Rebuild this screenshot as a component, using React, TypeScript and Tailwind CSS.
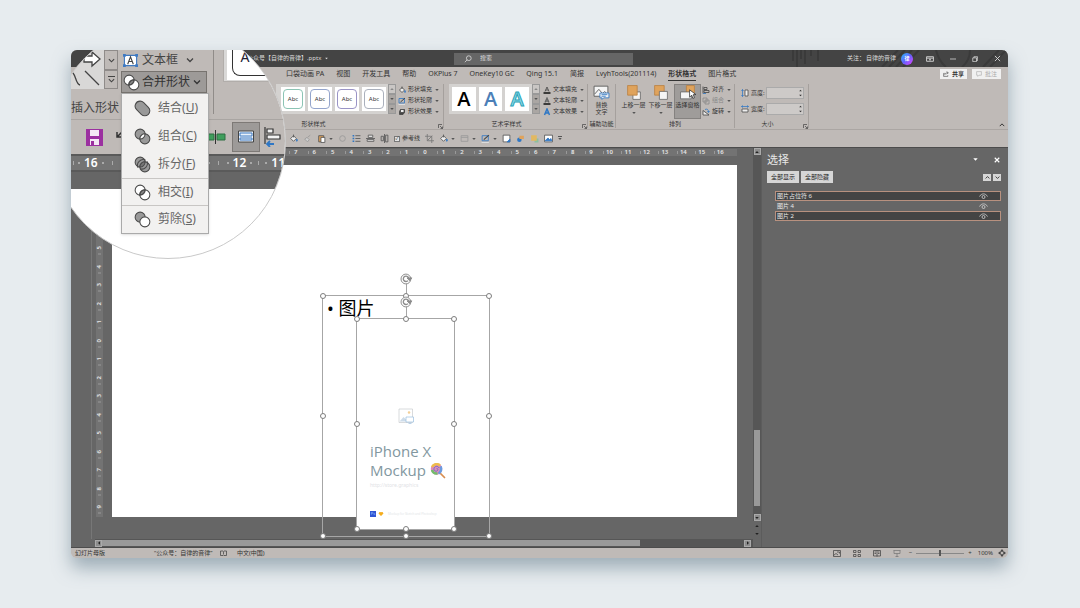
import { ReactNode, useState } from "react";
import clsx from "clsx";

const TABS = [
  "口袋动画 PA",
  "视图",
  "开发工具",
  "帮助",
  "OKPlus 7",
  "OneKey10 GC",
  "Qing 15.1",
  "简报",
  "LvyhTools(201114)",
  "形状格式",
  "图片格式",
];

const LAYERS = [
  { name: "图片占位符 6", selected: true },
  { name: "图片 4", selected: false },
  { name: "图片 2", selected: true },
];

const MERGE_ITEMS = [
  { label: "结合", hotkey: "U", kind: "union" },
  { label: "组合", hotkey: "C", kind: "combine" },
  { label: "拆分", hotkey: "F", kind: "fragment" },
  { label: "相交", hotkey: "I", kind: "intersect" },
  { label: "剪除", hotkey: "S", kind: "subtract" },
];

function Caret({ className = "size-1 text-[#555]" }: { className?: string }) {
  return (
    <svg viewBox="0 0 8 8" className={clsx("shrink-0", className)} fill="currentColor">
      <path d="M0.5 2h7L4 6z" />
    </svg>
  );
}

function Chevron({ className = "size-2" }: { className?: string }) {
  return (
    <svg
      viewBox="0 0 8 8"
      className={clsx("shrink-0", className)}
      fill="none"
      stroke="currentColor"
      strokeWidth="1.3"
    >
      <path d="M1 2.5l3 3 3-3" />
    </svg>
  );
}

function Launcher() {
  return (
    <svg viewBox="0 0 10 10" className="size-[5px]" fill="none" stroke="#444" strokeWidth="1.4">
      <path d="M1 8V1h7M4 4l5 5M9 5v4H5" />
    </svg>
  );
}

function MergeIcon({ kind, className = "size-[17px]" }: { kind: string; className?: string }) {
  const line = { stroke: "#4a4a4a", strokeWidth: 1.1 };
  const lens = "M11.7 6.2A5.3 5.3 0 0 0 6.2 11.7 5.3 5.3 0 0 0 11.7 6.2z";
  return (
    <svg viewBox="0 0 18 18" className={clsx("shrink-0", className)} fill="#fff">
      {kind === "union" && (
        <path
          d="M6.500 1.200A5.300 5.300 0 0 0 2.800 10.300L7.700 15.200A5.300 5.300 0 0 0 15.200 7.700L10.300 2.800A5.300 5.300 0 0 0 6.500 1.200z"
          fill="#999"
          {...line}
        />
      )}
      {(kind === "combine" || kind === "fragment") && (
        <>
          <circle cx="6.5" cy="6.5" r="5.3" fill="#999" {...line} />
          <circle cx="11.5" cy="11.5" r="5.3" fill="#999" {...line} />
          <path d={lens} fill={kind === "combine" ? "#fff" : "#777"} {...line} />
        </>
      )}
      {kind === "fragment" && (
        <>
          <path d="M13.700 5.500a6 6 0 0 1-7.500 8" fill="none" {...line} />
          <path d="M4.300 12.500a6 6 0 0 1 8-8" fill="none" {...line} />
        </>
      )}
      {kind === "intersect" && (
        <>
          <circle cx="6.5" cy="6.5" r="5.3" {...line} />
          <circle cx="11.5" cy="11.5" r="5.3" {...line} />
          <path d={lens} fill="#888" {...line} strokeWidth="1.5" />
        </>
      )}
      {kind === "subtract" && (
        <>
          <circle cx="6.5" cy="6.5" r="5.3" fill="#999" {...line} />
          <circle cx="11.5" cy="11.5" r="5.3" {...line} />
        </>
      )}
    </svg>
  );
}

function TitleBar() {
  return (
    <header className="relative flex h-[17px] shrink-0 items-center bg-[#444] pl-[176px] text-[6px] text-[#ddd]">
      <svg
        className="absolute right-0 top-0 h-full w-60"
        viewBox="0 0 240 17"
        fill="none"
        stroke="#3a3a3a"
        strokeWidth="2"
      >
        <path d="M25 0v11M29 0v17M33 0v9M37 0v14M43 0v6M50 0v11M114 17l16-17M121 17l16-17M128 17l16-17M135 17l16-17" />
        <path d="M168 0c2 8 5 13 10 17M202 0c0 8-3 13-8 17M215 17l16-17M222 17l16-17" />
      </svg>
      <span className="flex w-[207px] items-center gap-1">
        公众号【自律的音律】.pptx
        <Caret className="size-[3px] text-[#ddd]" />
      </span>
      <label className="flex h-3 w-[179px] items-center gap-2 bg-[#666] pl-2.5">
        <svg viewBox="0 0 10 10" className="size-2" fill="none" stroke="#ddd">
          <circle cx="6" cy="4" r="3" />
          <path d="M4 6L1 9" />
        </svg>
        <input
          aria-label="搜索"
          placeholder="搜索"
          className="w-24 bg-transparent outline-none placeholder:text-[#ddd]"
        />
      </label>
      <div className="relative ml-auto flex items-center pr-[7px]">
        <span>关注：</span>
        <span className="ml-px">自律的音律</span>
        <span className="ml-[5px] flex size-3 items-center justify-center rounded-full bg-linear-to-br from-sky-400 via-indigo-500 to-fuchsia-500 text-[5px] font-bold text-white">
          律
        </span>
        <button aria-label="功能区选项" className="ml-[13px]">
          <svg viewBox="0 0 14 10" className="h-[6px] w-2" fill="none" stroke="#ddd" strokeWidth="1.5">
            <path d="M1 1h12v8H1zM1 3.500h12M7 8V5M5.500 6L7 4.700 8.500 6" />
          </svg>
        </button>
        <button aria-label="最小化" className="ml-4">
          <svg viewBox="0 0 8 8" className="size-[6px]" stroke="#ddd">
            <path d="M0 4h8" />
          </svg>
        </button>
        <button aria-label="还原" className="ml-4">
          <svg viewBox="0 0 8 8" className="size-[6px]" fill="none" stroke="#ddd">
            <path d="M1 2.500h5v5H1zM2.500 2.500V1H7.500v5H6" />
          </svg>
        </button>
        <button aria-label="关闭" className="ml-4">
          <svg viewBox="0 0 8 8" className="size-[7px]" stroke="#ddd">
            <path d="M1 1l6 6M7 1L1 7" />
          </svg>
        </button>
      </div>
    </header>
  );
}

function TabRow() {
  const [active, setActive] = useState("形状格式");
  return (
    <nav className="flex h-[14px] shrink-0 items-center gap-3 pl-[215px] pr-[7px] text-[7px] text-[#333]">
      {TABS.map((tab) => (
        <button
          key={tab}
          onClick={() => setActive(tab)}
          className={clsx(
            "h-[13px] whitespace-nowrap border-b leading-3",
            tab === active ? "border-[#333] font-bold" : "border-transparent",
          )}
        >
          {tab}
        </button>
      ))}
      <div className="ml-auto flex gap-[5px] text-[6px] leading-[10px]">
        <button className="flex h-[10px] items-center gap-[3px] bg-[#f0f0f0] px-[3px] font-bold">
          <svg viewBox="0 0 10 10" className="size-[6px]" fill="none" stroke="#444">
            <path d="M3 4H1v5h7V7M3 7c0-3 2-4 5-4M6 1l3 2-3 2" />
          </svg>
          共享
        </button>
        <button className="flex h-[10px] items-center gap-[3px] bg-[#f0f0f0] px-1 text-[#aaa]">
          <svg viewBox="0 0 10 10" className="size-[6px]" fill="none" stroke="#aaa">
            <path d="M1 1h8v6H5L3 9V7H1z" />
          </svg>
          批注
        </button>
      </div>
    </nav>
  );
}

function Group({
  label,
  className,
  launcher = false,
  children,
}: {
  label: string;
  className?: string;
  launcher?: boolean;
  children: ReactNode;
}) {
  return (
    <section
      className={clsx("mb-px mt-[3px] flex shrink-0 flex-col border-r border-[#a5a09d]", className)}
    >
      <div className="flex h-9 shrink-0 items-start">{children}</div>
      <div className="relative h-2 text-center text-[6px] leading-[8px]">
        {label}
        {launcher && (
          <button aria-label={`${label}设置`} className="absolute right-0 top-1">
            <Launcher />
          </button>
        )}
      </div>
    </section>
  );
}

function GalleryScroll() {
  return (
    <div className="flex w-2 flex-col text-[#555]">
      {["上一行", "下一行", "更多"].map((name, i) => (
        <button
          key={name}
          aria-label={name}
          className={clsx(
            "flex h-[10px] items-center justify-center border border-[#999]",
            i === 0 ? "bg-[#c9c6c4] text-[#888]" : "bg-[#aaa6a3]",
          )}
        >
          <Caret className={i === 0 ? "size-1 rotate-180" : "size-1"} />
        </button>
      ))}
    </div>
  );
}

function StyleCommands({ items }: { items: { icon: ReactNode; label: string; muted?: boolean }[] }) {
  return (
    <div className="flex flex-col text-[6px] leading-[11px]">
      {items.map((item) => (
        <button
          key={item.label}
          className={clsx("flex h-[11px] items-center gap-0.5", item.muted && "text-[#888]")}
        >
          <svg viewBox="0 0 16 16" className="size-2" fill="none" stroke="#444" strokeWidth="1.6">
            {item.icon}
          </svg>
          {item.label}
          <Caret className="ml-px size-1 text-[#555]" />
        </button>
      ))}
    </div>
  );
}

const bucketPath = (
  <>
    <path d="M3 8l5-5 5 5-5 5z" fill="#eee" />
    <path d="M8 1v5" />
    <path d="M14 9c1 2 1 4 0 4s-1-2 0-4z" fill="#2f77c5" stroke="#2f77c5" />
  </>
);
const outlinePath = (
  <>
    <path d="M2 3h11v9H2z" stroke="#2f77c5" />
    <path d="M5 10l9-8" stroke="#444" strokeWidth="2" />
    <path d="M1 15h13" stroke="#ddd" strokeWidth="2" />
  </>
);
const effectPath = (
  <>
    <path d="M5 3h8v6l-3 4H3V7z" fill="#444" />
    <path d="M5 3h7v6H5z" fill="#eee" />
  </>
);

const SHAPE_TINTS = ["border-[#8cc4b4]", "border-[#94a5cc]", "border-[#9a94c6]", "border-[#aab0bc]"];

function Ribbon() {
  return (
    <div className="relative flex h-[49px] shrink-0 overflow-hidden border-b border-[#aba6a3] pl-[205px] text-[#333]">
      <Group label="形状样式" launcher className="w-[168px] [&>div:last-child]:pr-[92px]">
        <div className="flex h-[30px] w-[112px] items-center justify-end gap-[3px] bg-[#d4d2d0] pr-0.5">
          {SHAPE_TINTS.map((tint) => (
            <button key={tint} className="flex size-6 items-center justify-center bg-white">
              <span
                className={clsx(
                  "flex size-5 items-center justify-center rounded-[4px] border text-[6px]",
                  tint,
                )}
              >
                Abc
              </span>
            </button>
          ))}
        </div>
        <GalleryScroll />
        <div className="pl-0.5">
          <StyleCommands
            items={[
              { icon: bucketPath, label: "形状填充" },
              { icon: outlinePath, label: "形状轮廓" },
              { icon: effectPath, label: "形状效果" },
            ]}
          />
        </div>
      </Group>

      <Group label="艺术字样式" launcher className="w-[144px] [&>div:last-child]:pr-[18px]">
        <div className="ml-[5px] flex h-[30px] w-[83px] items-center gap-[3px] bg-[#d4d2d0] px-[3px] font-['Open_Sans','Noto_Sans',sans-serif] text-[20px] leading-6">
          <button className="size-6 bg-white font-semibold text-black">A</button>
          <button className="size-6 bg-white font-semibold text-[#4c7fb8]">A</button>
          <button className="size-6 bg-white font-semibold text-[#8fdce8] [-webkit-text-stroke:1px_#2ba3b8]">
            A
          </button>
        </div>
        <GalleryScroll />
        <div className="pl-[3px]">
          <StyleCommands
            items={[
              {
                icon: (
                  <>
                    <path d="M4 11l4-9 4 9M5.500 8h5" />
                    <path d="M1 14h14" strokeWidth="3" stroke="#111" />
                  </>
                ),
                label: "文本填充",
              },
              {
                icon: (
                  <>
                    <path d="M4 11l4-9 4 9M5.500 8h5" strokeWidth="2.500" stroke="#666" />
                    <path d="M1 14h14" strokeWidth="3" stroke="#111" />
                  </>
                ),
                label: "文本轮廓",
              },
              {
                icon: <path d="M3 14L8 2l5 12M5 10h6" stroke="#2f77c5" strokeWidth="3" />,
                label: "文本效果",
              },
            ]}
          />
        </div>
      </Group>

      <Group label="辅助功能" className="w-7">
        <button className="flex w-full flex-col items-center text-[6px] leading-[7px]">
          <svg viewBox="0 0 32 30" className="mb-0.5 h-4 w-[17px]" fill="#f4f4f4" stroke="#555" strokeWidth="1.600">
            <path d="M2 4h26v19H2z" />
            <path d="M3 19l8-9 7 8 4-4 6 6" fill="none" />
            <path d="M13 17h17v9H20l-3 3v-3h-4z" stroke="#2f77c5" />
            <path d="M16 20h11M16 23h8" stroke="#2f77c5" />
          </svg>
          替换
          <span>文字</span>
        </button>
      </Group>

      <Group label="排列" className="w-[119px]">
        {["上移一层", "下移一层", "选择窗格"].map((name, i) => (
          <button
            key={name}
            className={clsx(
              "flex h-[35px] flex-col items-center justify-start border text-[6px] leading-[8px]",
              i === 0 && "ml-1",
              i === 2 ? "border-[#858280] bg-[#9f9c9a]" : "border-transparent",
              "w-[27px] whitespace-nowrap",
            )}
          >
            <svg viewBox="0 0 30 30" className="size-4" strokeWidth="1.500">
              {i === 0 && (
                <>
                  <path d="M13 13h14v14H13z" fill="#f5f5f5" stroke="#666" />
                  <path d="M3 1h18v18H3z" fill="#dfa35c" stroke="#b98042" />
                </>
              )}
              {i === 1 && (
                <>
                  <path d="M3 1h18v18H3z" fill="#dfa35c" stroke="#b98042" />
                  <path d="M12 12h15v15H12z" fill="#f5f5f5" stroke="#666" />
                </>
              )}
              {i === 2 && (
                <>
                  <path d="M12 1h15v15H12z" fill="#dfa35c" stroke="#b98042" />
                  <path d="M1 13h20v13H1z" fill="#f5f5f5" stroke="#666" />
                  <path d="M18 9v14l4-4 2 6 3-1-2-6h5z" fill="#fff" stroke="#333" />
                </>
              )}
            </svg>
            {name}
            {i < 2 && <Caret className="mt-0.5 size-1 text-[#555]" />}
          </button>
        ))}
        <div className="pl-px">
          <StyleCommands
            items={[
              {
                icon: (
                  <>
                    <path d="M2 1v14M4 3h6v4H4zM4 9h10v4H4z" />
                    <path d="M2 15h6" stroke="#2f77c5" />
                  </>
                ),
                label: "对齐",
              },
              { icon: <path d="M2 2h8v8H2zM6 6h8v8H6z" stroke="#888" />, label: "组合", muted: true },
              {
                icon: (
                  <>
                    <path d="M2 14h12L2 5z" fill="#eee" />
                    <path d="M6 3c4-2 7 0 7 5M11 6l2 3 2-3" stroke="#2f77c5" />
                  </>
                ),
                label: "旋转",
              },
            ]}
          />
        </div>
      </Group>

      <Group label="大小" launcher className="w-[74px] [&>div:last-child]:pr-2">
        <div className="flex flex-col gap-1 pl-[6px] pt-[3px] text-[6px]">
          {["高度:", "宽度:"].map((name, i) => (
            <label key={name} className="flex h-3 items-center">
              <svg
                viewBox="0 0 16 16"
                className={clsx("mr-0.5 size-2", i === 1 && "rotate-90")}
                fill="none"
                stroke="#444"
                strokeWidth="1.500"
              >
                <path d="M8 2h6v12H8z" fill="#eee" />
                <path d="M3 1v14M1 4l2-3 2 3M1 12l2 3 2-3" stroke="#2f77c5" />
              </svg>
              <span className="w-[15px]">{name}</span>
              <span className="flex h-3 w-[38px] items-center border border-[#aaa] bg-[#cdcac8]">
                <input aria-label={name} className="w-8 bg-transparent outline-none" />
                <span className="flex flex-col gap-0.5">
                  <Caret className="size-[3px] rotate-180" />
                  <Caret className="size-[3px]" />
                </span>
              </span>
            </label>
          ))}
        </div>
      </Group>

      <button aria-label="折叠功能区" className="ml-auto self-end pb-px pr-[3px]">
        <Chevron className="size-[6px] rotate-180" />
      </button>
    </div>
  );
}

function QatIcon({
  name,
  caret = false,
  children,
}: {
  name: string;
  caret?: boolean;
  children: ReactNode;
}) {
  return (
    <button aria-label={name} className="flex items-center gap-[3px]">
      <svg viewBox="0 0 16 16" className="size-[9px]" fill="none" stroke="#555" strokeWidth="1.500">
        {children}
      </svg>
      {caret && <Caret />}
    </button>
  );
}

function QuickAccess() {
  return (
    <div className="flex h-[17px] shrink-0 items-center gap-[5px] pl-[218px] text-[#333]">
      <QatIcon name="填充颜色">{bucketPath}</QatIcon>
      <QatIcon name="格式刷">
        <path d="M3 9l5 5 3-4-4-4zM8 6l5-4" stroke="#999" fill="#ccc" />
      </QatIcon>
      <QatIcon name="粘贴" caret>
        <path d="M3 3h9v11H3z" fill="#dfa35c" />
        <path d="M7 6h7v9H7z" fill="#fff" />
      </QatIcon>
      <QatIcon name="形状">
        <circle cx="8" cy="8" r="5" stroke="#999" />
      </QatIcon>
      <QatIcon name="项目符号">
        <path d="M6 3h9M6 8h9M6 13h9" />
        <path d="M1 3h3M1 8h3M1 13h3" stroke="#2f77c5" strokeWidth="2.500" />
      </QatIcon>
      <QatIcon name="水平居中">
        <path d="M4 2h8v4H4zM2 10h12v3H2zM0 8h16" fill="#eee" />
      </QatIcon>
      <QatIcon name="垂直居中">
        <path d="M2 4h4v8H2zM10 2h4v12h-4zM8 0v16" />
      </QatIcon>
      <label className="flex items-center gap-0.5 text-[6px]">
        <input
          type="checkbox"
          defaultChecked
          className="flex size-[6px] appearance-none items-center justify-center border border-[#777] bg-[#e4e4e4] text-[5px] before:content-['✓']"
        />
        参考线
      </label>
      <QatIcon name="裁剪">
        <path d="M4 0v12h12M0 4h12v12M4 12l9-9" stroke="#777" />
      </QatIcon>
      <QatIcon name="形状填充" caret>
        {bucketPath}
      </QatIcon>
      <QatIcon name="表格" caret>
        <path d="M2 3h12v10H2zM2 6h12" stroke="#999" />
      </QatIcon>
      <QatIcon name="形状轮廓" caret>
        {outlinePath}
      </QatIcon>
      <QatIcon name="幻灯片">
        <path d="M2 2h12v12H2z" fill="#fff" />
        <path d="M9 14l5-5v5z" fill="#2f77c5" stroke="#2f77c5" />
      </QatIcon>
      <QatIcon name="合并">
        <circle cx="6" cy="10" r="4" fill="#2f77c5" stroke="none" />
        <path d="M6 3h8v6H6z" fill="#dfa35c" stroke="none" />
      </QatIcon>
      <QatIcon name="置于顶层">
        <path d="M8 8h7v7H8z" fill="#8cc0a0" stroke="none" />
        <path d="M2 2h10v10H2z" fill="#e2b860" stroke="none" />
      </QatIcon>
      <QatIcon name="图片">
        <path d="M1 2h14v12H1z" fill="#fff" />
        <path d="M2 12l5-5 3 3 2-2 2 4z" fill="#2f77c5" stroke="#2f77c5" />
      </QatIcon>
      <button aria-label="自定义" className="border-t border-[#555]">
        <Caret />
      </button>
    </div>
  );
}

function Ruler({ extent, vertical = false }: { extent: number; vertical?: boolean }) {
  const marks = Array.from({ length: extent * 2 + 1 }, (_, i) => Math.abs(i - extent));
  return (
    <div
      aria-hidden
      className={clsx(
        "flex bg-[#737373] text-[6px] font-semibold text-[#e6e6e6]",
        vertical ? "w-[7px] flex-col" : "h-[7px] px-2",
      )}
    >
      {marks.map((n, i) => (
        <span
          key={i}
          className={clsx(
            "flex min-h-0 min-w-0 flex-1 items-center justify-center leading-[7px]",
            vertical && "[writing-mode:vertical-rl] rotate-180",
          )}
        >
          <i className={clsx("bg-[#999]", vertical ? "h-px w-[3px]" : "h-[3px] w-px")} />
          <span className={clsx("text-center", vertical ? "h-[11px]" : "w-[11px]")}>{n}</span>
        </span>
      ))}
    </div>
  );
}

const HANDLES = [
  "left-0 top-0",
  "left-1/2 top-0",
  "left-full top-0",
  "left-0 top-1/2",
  "left-full top-1/2",
  "left-0 top-full",
  "left-1/2 top-full",
  "left-full top-full",
];

function Selection({ className, children }: { className: string; children: ReactNode }) {
  return (
    <div className={clsx("absolute border border-[#a6a6a6]", className)}>
      {children}
      <span className="absolute -top-4 left-1/2 h-4 w-px bg-[#a6a6a6]" />
      <svg
        viewBox="0 0 24 22"
        className="absolute -top-[23px] left-1/2 h-[12px] w-[14px] -translate-x-[6px]"
        fill="#fff"
        stroke="#8c8c8c"
        strokeWidth="1.800"
      >
        <circle cx="10" cy="11" r="9" />
        <path d="M14 14a5 5 0 1 1 1-5" fill="none" strokeWidth="2.500" />
        <path d="M12 9l9 0-4 5z" fill="#8c8c8c" />
      </svg>
      {HANDLES.map((pos) => (
        <span
          key={pos}
          className={clsx(
            "absolute size-[6px] -translate-1/2 rounded-full border border-[#7d7d7d] bg-white",
            pos,
          )}
        />
      ))}
    </div>
  );
}

function Slide() {
  return (
    <div className="relative aspect-video w-full bg-white">
      <Selection className="left-[210px] top-[130px] h-[242px] w-[168px]">
        <p className="pl-1 text-[18px] leading-6 text-black">• 图片</p>
      </Selection>
      <Selection className="left-[244px] top-[153px] h-[212px] w-[99px] rounded-b bg-white">
        <div className="flex h-full flex-col px-[13px] pt-[89px]">
          <svg viewBox="0 0 32 32" className="ml-7 size-4 shrink-0" fill="none" strokeWidth="1.300">
            <path d="M2 2h27v27H2z" fill="#fff" stroke="#c4c8cb" />
            <path d="M3 27l8-9 9 9z" fill="#cddcea" />
            <circle cx="22" cy="9" r="2.500" fill="#f3cf96" />
            <path d="M16 18h15v10H16zM21 31h6" fill="#fff" stroke="#93b9dd" />
          </svg>
          <h2 className="mt-[18px] whitespace-nowrap font-['Open_Sans','Noto_Sans',sans-serif] text-[15px] leading-[19px] text-[#8297a0]">
            iPhone X
            <br />
            <span className="flex items-center">
              Mockup
              <svg viewBox="0 0 32 32" className="ml-1 size-4 shrink-0" fill="none">
                <path d="M19 19l10 10" stroke="#d98e50" strokeWidth="3.500" strokeLinecap="round" />
                <circle cx="13" cy="12" r="11.500" fill="#e08bb8" />
                <path d="M4 8a10 10 0 0 1 16-3" stroke="#eebc4c" strokeWidth="5" />
                <path d="M21 7a10 10 0 0 1-4 14" stroke="#6a9be0" strokeWidth="5" />
                <path d="M15 21A10 10 0 0 1 4 14" stroke="#72bd6c" strokeWidth="5" />
                <path d="M13 12c1-2 4 0 2 3s-8 1-7-4 8-6 10-1" stroke="#6d70c8" strokeWidth="2" />
              </svg>
            </span>
          </h2>
          <p className="mt-0.5 text-[5px] leading-[7px] text-[#dfe3e6]">http://store.graphics</p>
          <div className="mt-[22px] flex items-center gap-0.5 text-[3px] text-[#e3e6e8]">
            <span className="size-[6px] shrink-0 bg-[#2f55d4] text-center text-[4px] leading-[6px] text-[#9cc4ff]">
              Ps
            </span>
            <svg viewBox="0 0 12 12" className="size-[6px] shrink-0">
              <path d="M1 5l2-3h2l1 1 1-1h2l2 3-5 5z" fill="#f5ad1d" />
            </svg>
            <span className="ml-0.5 whitespace-nowrap">Mockup for Sketch and Photoshop</span>
          </div>
        </div>
      </Selection>
    </div>
  );
}

function ScrollButton({ name, turn }: { name: string; turn: string }) {
  return (
    <button
      aria-label={name}
      className="flex size-[7px] shrink-0 items-center justify-center border border-[#aaa] bg-[#8d8d8d]"
    >
      <Caret className={clsx("size-1 text-[#222]", turn)} />
    </button>
  );
}

function Workspace() {
  return (
    <div className="flex min-w-0 flex-1 flex-col">
      <div className="flex flex-1">
        <div className="w-[21px] border-r border-[#777]" />
        <div className="flex min-w-0 flex-1 flex-col pt-px">
          <div className="pl-5 pr-4">
            <Ruler extent={16} />
          </div>
          <div className="mt-[9px] flex items-stretch pl-1 pr-4">
            <Ruler extent={9} vertical />
            <div className="ml-[9px] min-w-0 flex-1">
              <Slide />
            </div>
          </div>
        </div>
        <div className="flex w-2 flex-col items-center bg-[#565656]">
          <ScrollButton name="向上滚动" turn="rotate-180" />
          <div className="flex-1" />
          <div className="h-[76px] w-[6px] bg-[#999]" />
          <div className="h-2" />
          <ScrollButton name="向下滚动" turn="" />
          <button aria-label="上一张" className="h-2 w-full bg-[#666] pl-0.5 pt-0.5">
            <Caret className="size-1 rotate-180 text-[#222]" />
          </button>
          <button aria-label="下一张" className="h-2 w-full bg-[#666] pl-0.5 pt-0.5">
            <Caret className="size-1 text-[#222]" />
          </button>
          <div className="h-0.5 w-full bg-[#666]" />
        </div>
      </div>
      <div className="relative flex h-2 items-center bg-[#565656]">
        <div className="h-full w-6 bg-[#666]" />
        <ScrollButton name="向左滚动" turn="rotate-90" />
        <div className="h-[6px] w-[78%] bg-[#999]" />
        <div className="flex-1" />
        <ScrollButton name="向右滚动" turn="-rotate-90" />
        <div className="ml-0.5 h-full w-2 bg-[#666]" />
      </div>
    </div>
  );
}

function SelectionPane() {
  return (
    <aside className="flex w-[247px] shrink-0 flex-col border-l border-[#5c5c5c] pl-[5px] pr-[7px] text-[6px] text-[#e8e8e8]">
      <div className="flex h-[23px] items-center pr-px">
        <h2 className="text-[11px] leading-4">选择</h2>
        <button aria-label="窗格选项" className="ml-auto mr-4">
          <Caret className="size-[5px] text-white" />
        </button>
        <button aria-label="关闭窗格">
          <svg viewBox="0 0 8 8" className="size-[6px]" stroke="#fff" strokeWidth="1.500">
            <path d="M1 1l6 6M7 1L1 7" />
          </svg>
        </button>
      </div>
      <div className="flex items-center gap-0.5 text-[#222]">
        <button className="h-3 w-8 whitespace-nowrap bg-[#d6d6d6]">全部显示</button>
        <button className="h-3 w-8 whitespace-nowrap bg-[#d6d6d6]">全部隐藏</button>
        <button aria-label="上移" className="ml-auto flex h-[7px] w-2 items-center justify-center bg-[#d6d6d6]">
          <Chevron className="size-[5px] rotate-180" />
        </button>
        <button aria-label="下移" className="flex h-[7px] w-2 items-center justify-center bg-[#d6d6d6]">
          <Chevron className="size-[5px]" />
        </button>
      </div>
      <ul className="mt-2 pl-2">
        {LAYERS.map((layer) => (
          <li
            key={layer.name}
            className={clsx(
              "flex h-[10px] items-center justify-between border pl-px pr-3 leading-[8px]",
              layer.selected ? "border-[#b8917f] bg-[#444]" : "border-transparent",
            )}
          >
            {layer.name}
            <button aria-label={`显示或隐藏 ${layer.name}`}>
              <svg viewBox="0 0 18 12" className="h-[6px] w-[9px]" fill="none" stroke="#ddd" strokeWidth="1.500">
                <path d="M1 7c4-7 12-7 16 0" />
                <circle cx="9" cy="8" r="3" />
              </svg>
            </button>
          </li>
        ))}
      </ul>
    </aside>
  );
}

function StatusBar() {
  return (
    <footer className="flex h-[10px] shrink-0 items-center bg-[#bfbab7] pl-1 pr-0.5 text-[6px] leading-[10px] text-[#333]">
      <span className="w-[79px]">幻灯片母版</span>
      <span className="w-[66px]">“公众号：自律的音律”</span>
      <svg viewBox="0 0 14 14" className="size-[7px]" fill="none" stroke="#444" strokeWidth="1.500">
        <path d="M1 2h5l1 1 1-1h5v9H8l-1 1-1-1H1zM7 4v5" />
      </svg>
      <span className="ml-[10px]">中文(中国)</span>
      <div className="ml-auto flex items-center gap-3">
        <svg viewBox="0 0 16 14" className="h-[7px] w-2" fill="none" stroke="#444" strokeWidth="1.500">
          <path d="M1 1h14v12H1zM1 11l5-4 4 3M8 4h5v3" />
        </svg>
        <svg viewBox="0 0 16 14" className="h-[7px] w-2" fill="none" stroke="#444" strokeWidth="1.500">
          <path d="M1 1h5v4H1zM10 1h5v4h-5zM1 9h5v4H1zM10 9h5v4h-5z" />
        </svg>
        <svg viewBox="0 0 16 14" className="h-[7px] w-2" fill="none" stroke="#444" strokeWidth="1.500">
          <path d="M1 1h14v11H1zM8 1v12M3 4h3M3 7h3M10 4h3M10 7h3" />
        </svg>
        <svg viewBox="0 0 16 14" className="h-[7px] w-2" fill="none" stroke="#777" strokeWidth="1.500">
          <path d="M1 1h14M2 1v6h12V1M8 7v6M5 13h6" />
        </svg>
      </div>
      <button className="ml-2 leading-[8px]">−</button>
      <input
        type="range"
        aria-label="缩放"
        className="mx-1 h-px w-12 appearance-none bg-[#888] [&::-webkit-slider-thumb]:h-[6px] [&::-webkit-slider-thumb]:w-0.5 [&::-webkit-slider-thumb]:appearance-none [&::-webkit-slider-thumb]:bg-[#555]"
      />
      <button className="leading-[8px]">+</button>
      <span className="ml-[6px]">100%</span>
      <button aria-label="适应窗口" className="ml-[5px]">
        <svg viewBox="0 0 16 16" className="size-2" fill="#444">
          <path d="M8 0l3 4H5zM8 16l3-4H5zM0 8l4-3v6zM16 8l-4-3v6z" />
          <path d="M5 5h6v6H5z" fill="none" stroke="#444" strokeWidth="1.500" />
        </svg>
      </button>
    </footer>
  );
}

// Round magnifier that enlarges the merge shapes menu
function Magnifier() {
  return (
    <div className="absolute -left-[21px] -top-[27px] flex size-[236px] flex-col overflow-hidden rounded-full border border-[#c9c9c9] bg-white pt-[26px] text-[12px] leading-4 text-[#444]">
      <div className="flex h-[70px] shrink-0 border-b border-[#a9a5a2] bg-[#bfbab7] pl-5">
        <div className="w-[50px]">
          <div className="flex h-[39px]">
            <svg viewBox="0 0 33 39" className="h-full w-[33px] bg-[#d9d8d7]" fill="none" stroke="#444" strokeWidth="1.300">
              <path d="M13 6h8V2l8 7-8 7v-4h-8z" fill="#fff" />
              <path d="M0 22c5 0 4 12 9 13M14 21l14 14" />
            </svg>
            <div className="flex w-[14px] flex-col">
              <button aria-label="下一行形状" className="flex h-5 items-center justify-center border border-[#8f8b89]">
                <Chevron className="size-[7px]" />
              </button>
              <button aria-label="更多形状" className="flex h-[19px] flex-col items-center justify-center border border-[#8f8b89]">
                <span className="h-px w-[7px] bg-[#444]" />
                <Chevron className="size-[7px]" />
              </button>
            </div>
          </div>
          <p className="mt-[11px] w-[50px] whitespace-nowrap">插入形状</p>
        </div>
        <div className="relative w-[88px]">
          <button className="flex h-5 w-full items-center gap-1 pl-0.5">
            <svg viewBox="0 0 16 16" className="size-[15px]" fill="#fff" stroke="#3f7ac2" strokeWidth="1.200">
              <path d="M1.500 2.500h13v11h-13z" />
              <path d="M5 12l3-8 3 8M6 9h4" fill="none" stroke="#444" />
              <path d="M0 1h3v3H0zM13 1h3v3h-3zM0 12h3v3H0zM13 12h3v3h-3z" fill="#3f7ac2" stroke="none" />
            </svg>
            文本框
            <Chevron className="ml-1 size-2" />
          </button>
          <button
            aria-expanded="true"
            className="mt-px flex h-[22px] w-full items-center gap-0.5 border border-[#77736f] bg-[#9d9a98] pl-px text-[#333]"
          >
            <MergeIcon kind="intersect" />
            合并形状
            <Chevron className="ml-px size-2" />
          </button>
          <div className="absolute left-0 top-[43px] z-10 w-[88px] border border-[#aaa] bg-[#f2f1f0] pb-px shadow">
            {MERGE_ITEMS.map((item, i) => (
              <button
                key={item.kind}
                className={clsx(
                  "flex w-full items-center gap-[7px] pl-3 text-[#666]",
                  i > 2 ? "h-[27px] border-t border-[#c8c6c4]" : "h-7",
                )}
              >
                <MergeIcon kind={item.kind} />
                <span>
                  {item.label}(<u>{item.hotkey}</u>)
                </span>
              </button>
            ))}
          </div>
        </div>
        <div className="ml-[6px] h-16 w-px bg-[#908c89]" />
        <div className="ml-[9px] h-8 w-16 border-b border-l border-[#b1adaa] bg-[#d9d8d7] pb-px pl-[3px]">
          <div className="h-full bg-white pl-[5px]">
            <div className="h-[26px] rounded-bl-lg border-b border-l border-[#333] pl-2 text-[14px] leading-[14px] text-[#223]">
              A
            </div>
          </div>
        </div>
      </div>

      <div className="flex h-[34px] shrink-0 items-center bg-[#bfbab7] pl-[35px]">
        <button aria-label="保存">
          <svg viewBox="0 0 17 17" className="size-[17px]" fill="#9b30a0">
            <path d="M0 0h17v17H0z" />
            <path d="M4 1h9v6H4zM4 10h9v6H4z" fill="#f4e8f5" />
            <path d="M5 12h3v4H5z" />
          </svg>
        </button>
        <button aria-label="撤消" className="ml-3">
          <svg viewBox="0 0 12 12" className="size-3" fill="none" stroke="#333" strokeWidth="1.500">
            <path d="M2 1v5h5M2 6l5-5" />
          </svg>
        </button>
        <button aria-label="横向分布" className="ml-[79px]">
          <svg viewBox="0 0 20 14" className="h-[14px] w-5" fill="#3f9e5c" stroke="#2f6f43">
            <path d="M0 4h8v6H0zM11 4h8v6h-8z" />
            <path d="M9.500 0v14" stroke="#333" />
          </svg>
        </button>
        <button
          aria-label="对齐"
          className="ml-[6px] flex h-[30px] w-7 items-center justify-center border border-[#7d7976] bg-[#9d9a98]"
        >
          <svg viewBox="0 0 16 16" className="size-4" fill="#e9f1fa" stroke="#3f7ac2">
            <path d="M0.500 2h15v11h-15z" stroke="#444" />
            <path d="M2 4h12v3H2zM2 9h12v2H2z" />
          </svg>
        </button>
        <button aria-label="左对齐" className="ml-1">
          <svg viewBox="0 0 17 20" className="h-5 w-[17px] shrink-0" fill="#f3f3f3" stroke="#333" strokeWidth="1.200">
            <path d="M1 0v17" />
            <path d="M3 2h6v4H3zM3 8h13v4H3z" />
            <path d="M3 17h7M6 14l-3 3 3 3" stroke="#2f77c5" strokeWidth="1.800" fill="none" />
          </svg>
        </button>
      </div>

      <div className="flex h-[18px] shrink-0 items-center justify-between border-y-2 border-[#5a5a5a] bg-[#747474] pl-[22px] font-semibold text-white">
        <span className="flex items-center gap-1">
          <i className="h-1 w-px bg-[#aaa]" />
          <i className="size-0.5 bg-[#aaa]" />
          16
          <i className="size-0.5 bg-[#aaa]" />
          <i className="ml-1 h-1 w-px bg-[#aaa]" />
        </span>
        <span className="flex items-center gap-1">
          <i className="size-0.5 bg-[#aaa]" />
          <i className="mx-1 h-1 w-px bg-[#aaa]" />
          <i className="size-0.5 bg-[#aaa]" />
          12
          <i className="size-0.5 bg-[#aaa]" />
          <i className="mx-0.5 h-1 w-px bg-[#aaa]" />
          <i className="size-0.5 bg-[#aaa]" />
          11
        </span>
      </div>
      <div className="h-[17px] shrink-0 bg-[#666]" />
    </div>
  );
}

export default function App() {
  return (
    <div className="flex min-h-screen flex-col bg-[#e7ecef] pb-[50px] pl-[71px] pr-[72px] pt-[50px] font-['Noto_Sans','Noto_Sans_CJK_SC',sans-serif]">
      <main className="relative flex flex-1 flex-col rounded-md shadow-[0_10px_18px_rgba(85,112,128,0.5)]">
        <div className="relative flex flex-1 flex-col overflow-hidden rounded-md bg-[#bfbab7]">
          <TitleBar />
          <TabRow />
          <Ribbon />
          <QuickAccess />
          <div className="flex flex-1 border-y border-[#4c4c4c] bg-[#666]">
            <Workspace />
            <SelectionPane />
          </div>
          <StatusBar />
          <Magnifier />
        </div>
      </main>
    </div>
  );
}
